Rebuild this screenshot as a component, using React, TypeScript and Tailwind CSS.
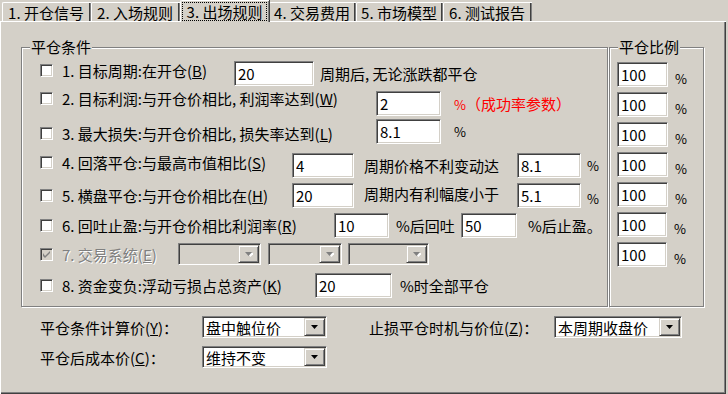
import type { ReactNode } from "react";

const sunken =
  "border border-t-[#808080] border-l-[#808080] border-r-white border-b-white shadow-[inset_1px_1px_0_#404040,inset_-1px_-1px_0_#d4d0c8]";
const raised =
  "border border-t-[#d4d0c8] border-l-[#d4d0c8] border-r-[#404040] border-b-[#404040] shadow-[inset_1px_1px_0_#fff,inset_-1px_-1px_0_#808080] bg-[#d4d0c8]";

const tabs = [
  { label: "1. 开仓信号", w: "w-[89px]" },
  { label: "2. 入场规则", w: "w-[89px]" },
  { label: "3. 出场规则", w: "w-[89px]", active: true },
  { label: "4. 交易费用", w: "w-[87px]" },
  { label: "5. 市场模型", w: "w-[87px]" },
  { label: "6. 测试报告", w: "w-[89px]" },
];

function Field({ value, w }: { value: string; w: string }) {
  return (
    <input
      readOnly
      value={value}
      className={`${w} h-[25px] shrink-0 bg-white ${sunken} px-[3px] text-[15px] leading-none text-black outline-none`}
    />
  );
}

function Arrow({ disabled }: { disabled?: boolean }) {
  return (
    <svg width="8" height="5" viewBox="0 0 8 5">
      {disabled && <path d="M2 1h7L5.5 5z" fill="#fff" />}
      <path d="M0 0h7L3.5 4z" fill={disabled ? "#808080" : "#000"} />
    </svg>
  );
}

function Combo({ value, w, disabled }: { value?: string; w: string; disabled?: boolean }) {
  return (
    <div
      className={`${w} h-[22px] shrink-0 flex p-[1px] ${sunken} ${disabled ? "bg-[#d4d0c8]" : "bg-white"}`}
    >
      <div className="flex-1 flex items-center pl-[2px] text-[15px] leading-none text-black whitespace-nowrap">
        {value}
      </div>
      <div className={`w-[21px] h-[18px] ${raised} flex items-center justify-center`}>
        <Arrow disabled={disabled} />
      </div>
    </div>
  );
}

function Check({ checked, disabled }: { checked?: boolean; disabled?: boolean }) {
  return (
    <div
      className={`w-[13px] h-[13px] shrink-0 flex items-center justify-center ${sunken} ${disabled ? "bg-[#d4d0c8]" : "bg-white"}`}
    >
      {checked && (
        <svg width="7" height="7" viewBox="0 0 7 7">
          <path d="M0 2v3l2 2 5-5V0L2 5z" fill={disabled ? "#808080" : "#000"} />
        </svg>
      )}
    </div>
  );
}

function Label({ children, w, shift = "", disabled }: { children: ReactNode; w: string; shift?: string; disabled?: boolean }) {
  return (
    <div className={`${w} ml-[18px] shrink-0 flex items-center ${shift}`}>
      <Check checked={disabled} disabled={disabled} />
      <span
        className={`ml-[9px] whitespace-nowrap ${disabled ? "text-[#808080] [text-shadow:1px_1px_0_#fff]" : ""}`}
      >
        {children}
      </span>
    </div>
  );
}

function Group({ title, w, children }: { title: string; w: string; children: ReactNode }) {
  return (
    <div
      className={`relative ${w} h-[260px] shrink-0 border border-[#808080] shadow-[inset_1px_1px_0_#fff,1px_1px_0_#fff]`}
    >
      <span className="absolute -top-[9px] left-[8px] bg-[#d4d0c8] px-[1px] text-[15px] leading-none">
        {title}
      </span>
      {children}
    </div>
  );
}

const Pct = ({ className = "" }: { className?: string }) => (
  <span className={`text-[13px] leading-none ${className}`}>%</span>
);

export default function App() {
  const ratios = ["w-[51px]", "w-[51px]", "w-[51px]", "w-[51px]", "w-[51px]", "w-[50px]", "w-[50px]"];

  return (
    <div className="w-[728px] h-[394px] bg-[#d4d0c8] overflow-hidden font-['Noto_Sans_CJK_SC',sans-serif] text-[15px] leading-none text-black">
      {/* tab strip */}
      <div className="h-[21px] flex items-end pl-[2px]">
        {tabs.map((t) =>
          t.active ? (
            <div
              key={t.label}
              className={`${t.w} h-[22px] -mb-[1px] relative z-10 bg-[#d4d0c8] border-t border-l border-white rounded-tl-[2px] shadow-[inset_-1px_0_0_#808080,1px_0_0_#404040] p-[1px] pr-[2px]`}
            >
              <div className="h-[19px] border border-dotted border-black flex items-center justify-center whitespace-nowrap">
                {t.label}
              </div>
            </div>
          ) : (
            <div
              key={t.label}
              className={`${t.w} h-[19px] bg-[#d4d0c8] border-t border-l border-white rounded-tl-[2px] shadow-[inset_-1px_0_0_#808080,inset_-2px_0_0_#404040] flex items-center justify-center whitespace-nowrap pr-[2px]`}
            >
              {t.label}
            </div>
          )
        )}
      </div>

      {/* tab panel */}
      <div className="w-[726px] h-[373px] border-t border-l border-white shadow-[inset_-1px_-1px_0_#404040,inset_-2px_-2px_0_#808080]">
        <div className="flex mt-[25px] ml-[20px]">
          <Group title="平仓条件" w="w-[587px]">
            <div className="flex flex-col">
              {/* 1 */}
              <div className="h-[25px] mt-[13px] flex items-center">
                <Label w="w-[194px]" shift="mb-[7px]">
                  1. 目标周期:在开仓(<u>B</u>)
                </Label>
                <Field value="20" w="w-[80px]" />
                <span className="ml-[6px] whitespace-nowrap">周期后, 无论涨跌都平仓</span>
              </div>
              {/* 2 */}
              <div className="h-[25px] mt-[5px] flex items-center">
                <Label w="w-[336px]" shift="mb-[10px]">
                  2. 目标利润:与开仓价相比, 利润率达到(<u>W</u>)
                </Label>
                <Field value="2" w="w-[65px]" />
                <span className="ml-[13px] text-[#ff0000] whitespace-nowrap">
                  <span className="text-[13px]">%</span>（成功率参数）
                </span>
              </div>
              {/* 3 */}
              <div className="h-[25px] mt-[3px] flex items-center">
                <Label w="w-[336px]" shift="mt-[3px]">
                  3. 最大损失:与开仓价相比, 损失率达到(<u>L</u>)
                </Label>
                <Field value="8.1" w="w-[65px]" />
                <Pct className="ml-[13px]" />
              </div>
              {/* 4 */}
              <div className="h-[25px] mt-[9px] flex items-center">
                <Label w="w-[252px]" shift="mb-[7px]">
                  4. 回落平仓:与最高市值相比(<u>S</u>)
                </Label>
                <Field value="4" w="w-[62px]" />
                <span className="ml-[10px] w-[153px] whitespace-nowrap">周期价格不利变动达</span>
                <Field value="8.1" w="w-[64px]" />
                <Pct className="ml-[6px]" />
              </div>
              {/* 5 */}
              <div className="h-[25px] mt-[5px] flex items-center">
                <Label w="w-[252px]">
                  5. 横盘平仓:与开仓价相比在(<u>H</u>)
                </Label>
                <Field value="20" w="w-[62px]" />
                <span className="ml-[10px] w-[153px] whitespace-nowrap mb-[5px]">周期内有利幅度小于</span>
                <Field value="5.1" w="w-[64px]" />
                <Pct className="ml-[6px] mt-[5px]" />
              </div>
              {/* 6 */}
              <div className="h-[25px] mt-[5px] flex items-center">
                <Label w="w-[294px]">
                  6. 回吐止盈:与开仓价相比利润率(<u>R</u>)
                </Label>
                <Field value="10" w="w-[55px]" />
                <span className="ml-[7px] w-[65px] whitespace-nowrap">%后回吐</span>
                <Field value="50" w="w-[56px]" />
                <span className="ml-[11px] whitespace-nowrap">%后止盈。</span>
              </div>
              {/* 7 */}
              <div className="h-[22px] mt-[5px] flex items-center">
                <Label w="w-[138px]" disabled>
                  7. 交易系统(<u>E</u>)
                </Label>
                <Combo w="w-[83px]" disabled />
                <div className="ml-[7px]">
                  <Combo w="w-[74px]" disabled />
                </div>
                <div className="ml-[6px]">
                  <Combo w="w-[81px]" disabled />
                </div>
              </div>
              {/* 8 */}
              <div className="h-[25px] mt-[8px] flex items-center">
                <Label w="w-[275px]">
                  8. 资金变负:浮动亏损占总资产(<u>K</u>)
                </Label>
                <Field value="20" w="w-[77px]" />
                <span className="ml-[8px] whitespace-nowrap">%时全部平仓</span>
              </div>
            </div>
          </Group>

          <div className="ml-[1px]">
            <Group title="平仓比例" w="w-[95px]">
              <div className="flex flex-col gap-[5px] pt-[14px]">
                {ratios.map((w, i) => (
                  <div key={i} className="h-[25px] flex items-center ml-[7px]">
                    <Field value="100" w={w} />
                    <Pct className="ml-[7px] mt-[8px]" />
                  </div>
                ))}
              </div>
            </Group>
          </div>
        </div>

        {/* bottom selectors */}
        <div className="mt-[9px] ml-[39px] flex items-center h-[22px]">
          <span className="w-[162px] whitespace-nowrap">
            平仓条件计算价(<u>Y</u>)：
          </span>
          <Combo value="盘中触位价" w="w-[125px]" />
          <span className="ml-[42px] w-[185px] whitespace-nowrap">
            止损平仓时机与价位(<u>Z</u>)：
          </span>
          <Combo value="本周期收盘价" w="w-[128px]" />
        </div>
        <div className="mt-[8px] ml-[39px] flex items-center h-[22px]">
          <span className="w-[162px] whitespace-nowrap">
            平仓后成本价(<u>C</u>)：
          </span>
          <Combo value="维持不变" w="w-[125px]" />
        </div>
      </div>
    </div>
  );
}
